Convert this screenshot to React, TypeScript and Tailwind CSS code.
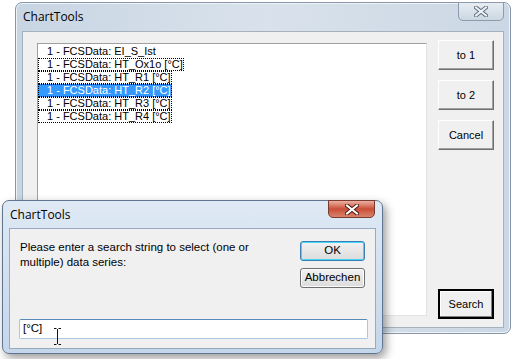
const ui = { fontFamily: '"Liberation Sans", Arial, sans-serif' };
const title = { fontFamily: '"Open Sans", "Noto Sans", sans-serif' };

const items = [
  "1 - FCSData: EI_S_Ist",
  "1 - FCSData: HT_Ox1o [°C]",
  "1 - FCSData: HT_R1 [°C]",
  "1 - FCSData: HT_R2 [°C]",
  "1 - FCSData: HT_R3 [°C]",
  "1 - FCSData: HT_R4 [°C]",
];

function CloseGlyph({ active }: { active?: boolean }) {
  return (
    <svg width="14" height="11" viewBox="0 0 14 11">
      <path
        d="M2 1.5 L12 9.5 M12 1.5 L2 9.5"
        stroke={active ? "#4a1a12" : "#5f6c7b"}
        strokeWidth="4"
        strokeLinecap="square"
      />
      <path
        d="M2 1.5 L12 9.5 M12 1.5 L2 9.5"
        stroke={active ? "#ffffff" : "#eef2f6"}
        strokeWidth="2"
        strokeLinecap="square"
      />
    </svg>
  );
}

function WinButton({ label, def }: { label: string; def?: boolean }) {
  return (
    <div
      className={
        "flex h-[30px] w-[56px] items-center justify-center bg-[#f0f0f0] text-[11px] text-black " +
        (def
          ? "border-2 border-black shadow-[inset_-1px_-1px_0_#808080,inset_1px_1px_0_#ffffff]"
          : "border border-[#ffffff] border-r-[#707070] border-b-[#707070] shadow-[inset_-1px_-1px_0_#a0a0a0]")
      }
    >
      {label}
    </div>
  );
}

function MainWindow() {
  return (
    <div className="absolute left-[15px] top-[2px] flex h-[332px] w-[496px] flex-col rounded-[7px] border border-[#8796a8] bg-gradient-to-r from-[#c8d5e3] via-[#d9e2ec] to-[#cbd7e4] shadow-[inset_0_0_0_1px_#eef3f8]">
      <div className="relative flex h-[28px] shrink-0 items-center pl-[7px]">
        <span style={title} className="text-[12px] text-black">ChartTools</span>
        <div className="absolute right-[6px] top-[-1px] flex h-[19px] w-[46px] items-center justify-center rounded-b-[5px] border border-[#8e9bab] bg-gradient-to-b from-[#e6ecf2] to-[#ccd7e2]">
          <CloseGlyph />
        </div>
      </div>
      <div className="mx-[6px] flex h-[297px] border border-[#a5b1bd] bg-[#f0f0f0] pl-[14px] pr-[9px] pt-[8px] pb-[8px]">
        <div className="mt-[3px] h-[273px] w-[391px] border border-[#a0a0a0] border-r-[#e3e3e3] border-b-[#e3e3e3] bg-white pt-px">
          {items.map((t, i) => (
            <div
              key={t}
              style={ui}
              className={
                "flex h-[13px] w-fit items-center pl-[9px] pr-[1px] text-[11px] leading-[13px] " +
                (i === 0 ? "" : "outline-1 outline-dotted outline-offset-[-1px] outline-black ") +
                (i === 3 ? "bg-[#3399ff] text-white" : "text-black")
              }
            >
              {t}
            </div>
          ))}
        </div>
        <div style={ui} className="ml-[11px] flex flex-col gap-[10px]">
          <WinButton label="to 1" />
          <WinButton label="to 2" />
          <WinButton label="Cancel" />
          <div className="flex-1" />
          <WinButton label="Search" def />
        </div>
      </div>
    </div>
  );
}

function Dialog() {
  return (
    <div className="absolute left-[2px] top-[200px] flex h-[154px] w-[381px] flex-col rounded-[7px] border border-[#5f7590] bg-gradient-to-b from-[#dfe9f5] to-[#c4d6ea] shadow-[3px_4px_10px_rgba(0,0,0,0.4)]">
      <div className="relative flex h-[27px] shrink-0 items-center pl-[7px]">
        <span style={title} className="text-[12px] text-black">ChartTools</span>
        <div className="absolute right-[7px] top-[-1px] flex h-[18px] w-[47px] items-center justify-center rounded-b-[5px] border border-[#7a3a30] bg-gradient-to-b from-[#eab0a1] via-[#c94d37] to-[#d9826b]">
          <CloseGlyph active />
        </div>
      </div>
      <div style={ui} className="mx-[6px] flex h-[121px] flex-col border border-[#99aabd] bg-[#f0f0f0]">
        <div className="flex">
          <div className="flex-1 pl-[10px] pt-[11px] text-[11.5px] leading-[15px] text-black">
            Please enter a search string to select (one or
            <br />
            multiple) data series:
          </div>
          <div className="mr-[10px] mt-[12px] flex w-[65px] flex-col gap-[7px]">
            <div className="flex h-[20px] items-center justify-center rounded-[3px] border border-[#3c7fb1] bg-gradient-to-b from-[#f2f2f2] to-[#dcdcdc] text-[11.5px] text-black shadow-[inset_0_0_0_1px_#48d5fb]">
              OK
            </div>
            <div className="flex h-[20px] items-center justify-center rounded-[3px] border border-[#707070] bg-gradient-to-b from-[#f2f2f2] to-[#dcdcdc] text-[11.5px] text-black shadow-[inset_0_0_0_1px_#fcfcfc]">
              Abbrechen
            </div>
          </div>
        </div>
        <div className="flex-1" />
        <div className="relative mb-[9px] ml-[9px] flex h-[20px] w-[349px] items-center rounded-[2px] border border-[#a9c6e2] border-t-[#5889b8] bg-white pl-[3px] text-[11.5px] text-black">
          [°C]
          <svg className="absolute left-[33px] top-[8px]" width="9" height="17" viewBox="0 0 9 17">
            <path d="M1 0.5 H3.5 M5.5 0.5 H8 M4.5 1 V16 M1 16.5 H3.5 M5.5 16.5 H8" stroke="#111" strokeWidth="1" fill="none" />
          </svg>
        </div>
      </div>
    </div>
  );
}

export default function App() {
  return (
    <div className="relative h-[359px] w-[514px] overflow-hidden bg-white">
      <MainWindow />
      <Dialog />
    </div>
  );
}
